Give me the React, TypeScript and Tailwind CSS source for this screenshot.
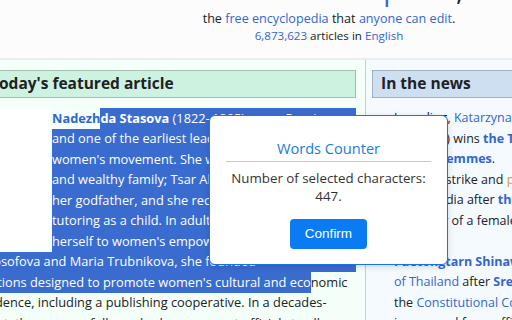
import React from 'react';

const SANS = "font-['Segoe_UI','Open_Sans','Noto_Sans',sans-serif]";

type Line = {
  pre?: React.ReactNode;
  sel?: React.ReactNode;
  post?: React.ReactNode;
  full?: boolean;
  float?: boolean;
};

const link = 'text-[#3366cc]';
const boldLink = 'font-bold text-[#3366cc]';

// hard line breaks so the selection ends where the screenshot shows it
const featured: Line[] = [
  {
    float: true,
    pre: <span className={boldLink}>Nadezh</span>,
    sel: (
      <>
        <b>da Stasova</b> (1822–1895) was a Russian
      </>
    ),
    full: true,
  },
  { float: true, sel: 'and one of the earliest leaders of the Russian', full: true },
  { float: true, sel: "women's movement. She was born into a rich", full: true },
  { float: true, sel: 'and wealthy family; Tsar Alexander I was', full: true },
  { float: true, sel: 'her godfather, and she received private', full: true },
  { float: true, sel: 'tutoring as a child. In adulthood, she devoted', full: true },
  { float: true, sel: "herself to women's empowerment. With", full: true },
  { sel: 'Anna Filosofova and Maria Trubnikova, she founded', full: true },
  {
    sel: "organizations designed to promote women's cultural and eco",
    post: 'nomic',
  },
  { post: 'independence, including a publishing cooperative. In a decades-' },
  { post: 'long effort, they successfully pushed government officials to allow' },
];

function FeaturedLine({ line }: { line: Line }) {
  return (
    <div className={`flex h-[20.5px] items-center whitespace-nowrap ${line.float ? 'pl-[106px]' : 'pl-0'}`}>
      {line.pre ? <span>{line.pre}</span> : null}
      {line.sel ? (
        <span
          className={`flex h-full items-center bg-[#3a6cd0] text-white ${line.full ? 'flex-1' : ''}`}
        >
          <span className="[&_b]:font-bold">{line.sel}</span>
        </span>
      ) : null}
      {line.post ? <span>{line.post}</span> : null}
    </div>
  );
}

function NewsLine({ children }: { children?: React.ReactNode }) {
  return <div className="h-[20.5px] whitespace-nowrap leading-[20.5px]">{children}</div>;
}

export default function App() {
  return (
    <div className={`relative h-[320px] w-[512px] overflow-hidden bg-white text-[12.8px] text-[#202122] ${SANS}`}>
      {/* masthead */}
      <div className="flex h-[60px] flex-col border-b-2 border-[#eaecf0] bg-[#fcfcfd]">
        <div className="mt-[-29px] flex h-[36px] shrink-0 items-end justify-center pl-[118px] text-[28px] leading-[36px]">
          <span>
            Welcome to <span className={link}>Wikipedia</span>,
          </span>
        </div>
        <div className="mt-[3px] pl-[146px] text-center text-[12.6px] leading-[18px]">
          the <span className={link}>free encyclopedia</span> that{' '}
          <span className={link}>anyone can edit</span>.
        </div>
        <div className="pl-[146px] text-center text-[11.6px] leading-[16px]">
          <span className={link}>6,873,623</span> articles in{' '}
          <span className={link}>English</span>
        </div>
      </div>

      <div className="flex h-[260px]">
        {/* today's featured article */}
        <div className="ml-[-54px] w-[420px] shrink-0 border-r border-[#c8ccd1] bg-[#f5fffa] pr-[9px] pt-[10px]">
          <div className="flex h-[28px] items-center border border-[#a3bfb1] bg-[#cef2e0] pl-[43px] text-[15.5px] font-bold">
            Today's featured article
          </div>
          <div className="relative mt-[10px]">
            <div className="absolute left-0 top-0 h-[142px] w-[104px] bg-white" />
            <div className="relative">
              {featured.map((line, i) => (
                <FeaturedLine key={i} line={line} />
              ))}
            </div>
          </div>
        </div>

        {/* in the news */}
        <div className="min-w-0 flex-1 bg-[#f5faff] pl-[6px] pt-[10px]">
          <div className="flex h-[28px] w-[200px] items-center border border-[#a3b0bf] bg-[#cedff2] pl-[8px] text-[15.5px] font-bold">
            In the news
          </div>
          <div className="mt-[10px] pl-[22px] text-[12.5px]">
            <NewsLine>
              In cycling, <span className={link}>Katarzyna Niewiadoma</span>
            </NewsLine>
            <NewsLine>
              (pictured) wins <span className={boldLink}>the Tour de</span>
            </NewsLine>
            <NewsLine>
              <span className={boldLink}>France Femmes</span>.
            </NewsLine>
            <NewsLine>
              Doctors' strike and <span className="text-[#d09a50]">protests</span>
            </NewsLine>
            <NewsLine>
              across India after <span className={boldLink}>the rape</span>
            </NewsLine>
            <NewsLine>a murder of a female doctor</NewsLine>
            <NewsLine />
            <NewsLine>
              <span className={boldLink}>Paetongtarn Shinawatra</span>
            </NewsLine>
            <NewsLine>
              <span className={link}>of Thailand</span> after{' '}
              <span className={boldLink}>Srettha</span>
            </NewsLine>
            <NewsLine>
              the <span className={link}>Constitutional Court</span>
            </NewsLine>
            <NewsLine>is removed from office.</NewsLine>
          </div>
        </div>
      </div>

      {/* words counter popup */}
      <div className="absolute left-[209px] top-[115px] flex h-[150px] w-[239px] flex-col items-center rounded-[6px] border border-[#1a73e8] bg-white shadow-[0_2px_6px_rgba(0,0,0,0.15)]">
        <div className="mt-[21px] text-[14.6px] leading-[22px] text-[#1a7be0]">Words Counter</div>
        <div className="mt-[2px] h-px w-[205px] bg-[#c8c8c8]" />
        <div className="mt-[7px] text-center text-[13.3px] leading-[18px] text-[#333]">
          Number of selected characters:
          <br />
          447.
        </div>
        <button
          type="button"
          className="mt-[14px] h-[30px] w-[77px] rounded-[4px] bg-[#0b7bf4] font-['Liberation_Sans',Arial,sans-serif] text-[13.5px] text-white"
        >
          Confirm
        </button>
      </div>
    </div>
  );
}
